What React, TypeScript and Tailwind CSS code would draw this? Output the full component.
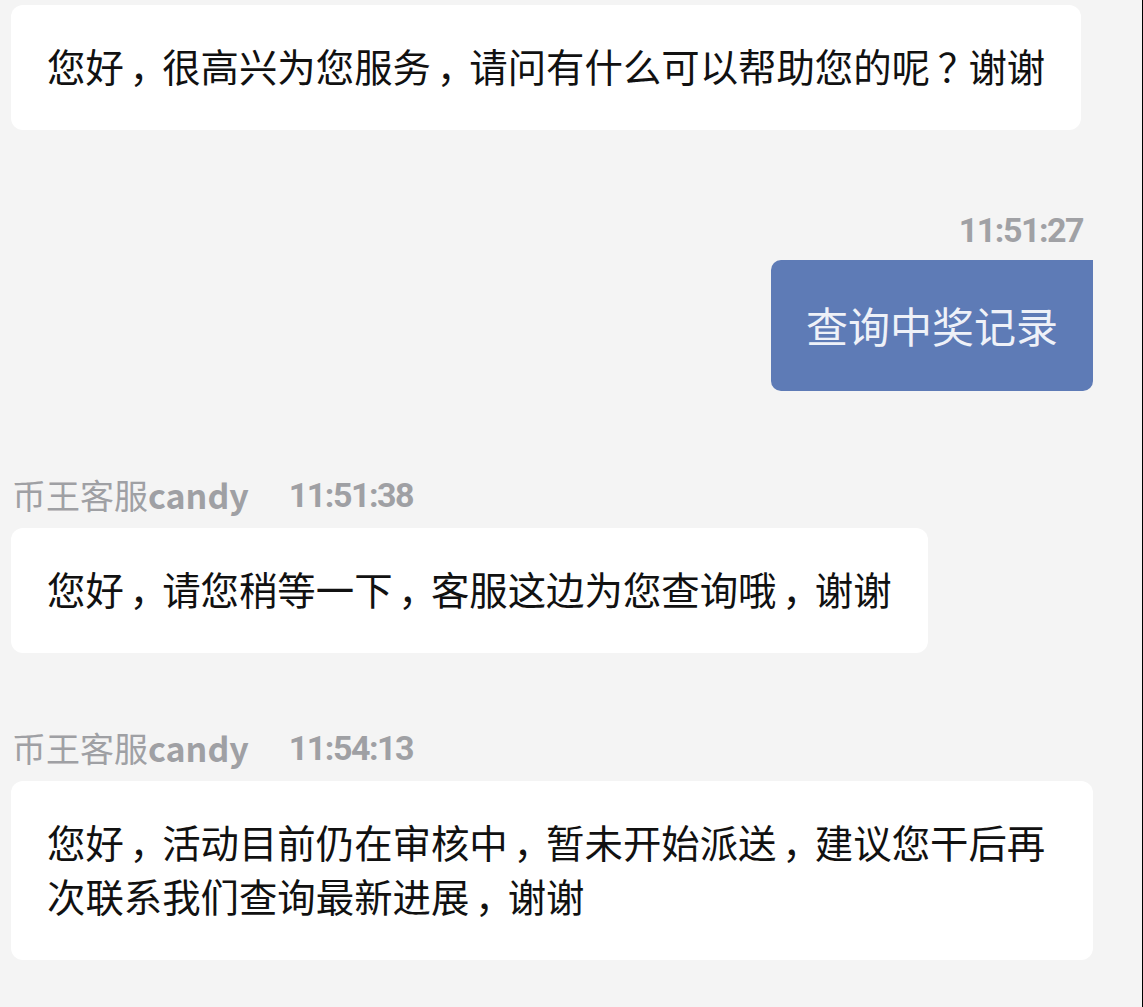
const cjk = "font-['Noto_Sans_CJK_SC',sans-serif]";
const digits = "font-['Roboto','Noto_Sans_CJK_SC',sans-serif]";

// full-width punctuation sits in the middle of its cell in the reference
function Text({ text }: { text: string }) {
  return (
    <>
      {text.split(/([，？])/).map((part, i) =>
        part === "，" ? (
          <span key={i} className="inline-block w-[1em] pl-[0.15em] tracking-[-0.15em]">
            {part}
          </span>
        ) : part === "？" ? (
          <span key={i} className="inline-block w-[1em] pl-[0.2em] tracking-[-0.2em]">
            {part}
          </span>
        ) : (
          part
        )
      )}
    </>
  );
}

function Bubble({ text, className = "" }: { text: string; className?: string }) {
  return (
    <div
      className={`w-fit max-w-full rounded-[12px] bg-white px-[36px] pt-[33px] pb-[38px] text-[38.4px] leading-[54px] text-[#111] ${cjk} ${className}`}
    >
      <Text text={text} />
    </div>
  );
}

function Sender({ name, time, className = "" }: { name: string; time: string; className?: string }) {
  return (
    <div className={`flex h-[40px] items-center pl-[1px] leading-[40px] text-[#9fa0a4] ${className}`}>
      <span className={`text-[34px] ${cjk}`}>
        币王客服<span className="font-semibold">{name}</span>
      </span>
      <span className={`ml-[40px] text-[34px] font-bold tracking-[-1.5px] ${digits}`}>{time}</span>
    </div>
  );
}

export default function App() {
  return (
    <div className="min-h-screen w-full border-r border-black bg-[#f4f4f4] pt-[5px] pr-[49px] pl-[11px]">
      <div className="flex flex-col">
        <Bubble text="您好，很高兴为您服务，请问有什么可以帮助您的呢？谢谢" />

        <div
          className={`mt-[80px] h-[40px] pr-[10px] text-right text-[34px] font-bold leading-[40px] tracking-[-1.5px] text-[#a0a1a5] ${digits}`}
        >
          11:51:27
        </div>
        <div className="mt-[10px] flex justify-end">
          <div
            className={`rounded-[10px] rounded-tr-none bg-[#5e7bb6] px-[35px] pt-[35px] pb-[36px] text-[42px] leading-[60px] text-[#eef1f8] ${cjk}`}
          >
            查询中奖记录
          </div>
        </div>

        <Sender name="candy" time="11:51:38" className="mt-[84px]" />
        <Bubble text="您好，请您稍等一下，客服这边为您查询哦，谢谢" className="mt-[13px]" />

        <Sender name="candy" time="11:54:13" className="mt-[75px]" />
        <Bubble
          text="您好，活动目前仍在审核中，暂未开始派送，建议您干后再次联系我们查询最新进展，谢谢"
          className="mt-[13px]"
        />
      </div>
    </div>
  );
}
